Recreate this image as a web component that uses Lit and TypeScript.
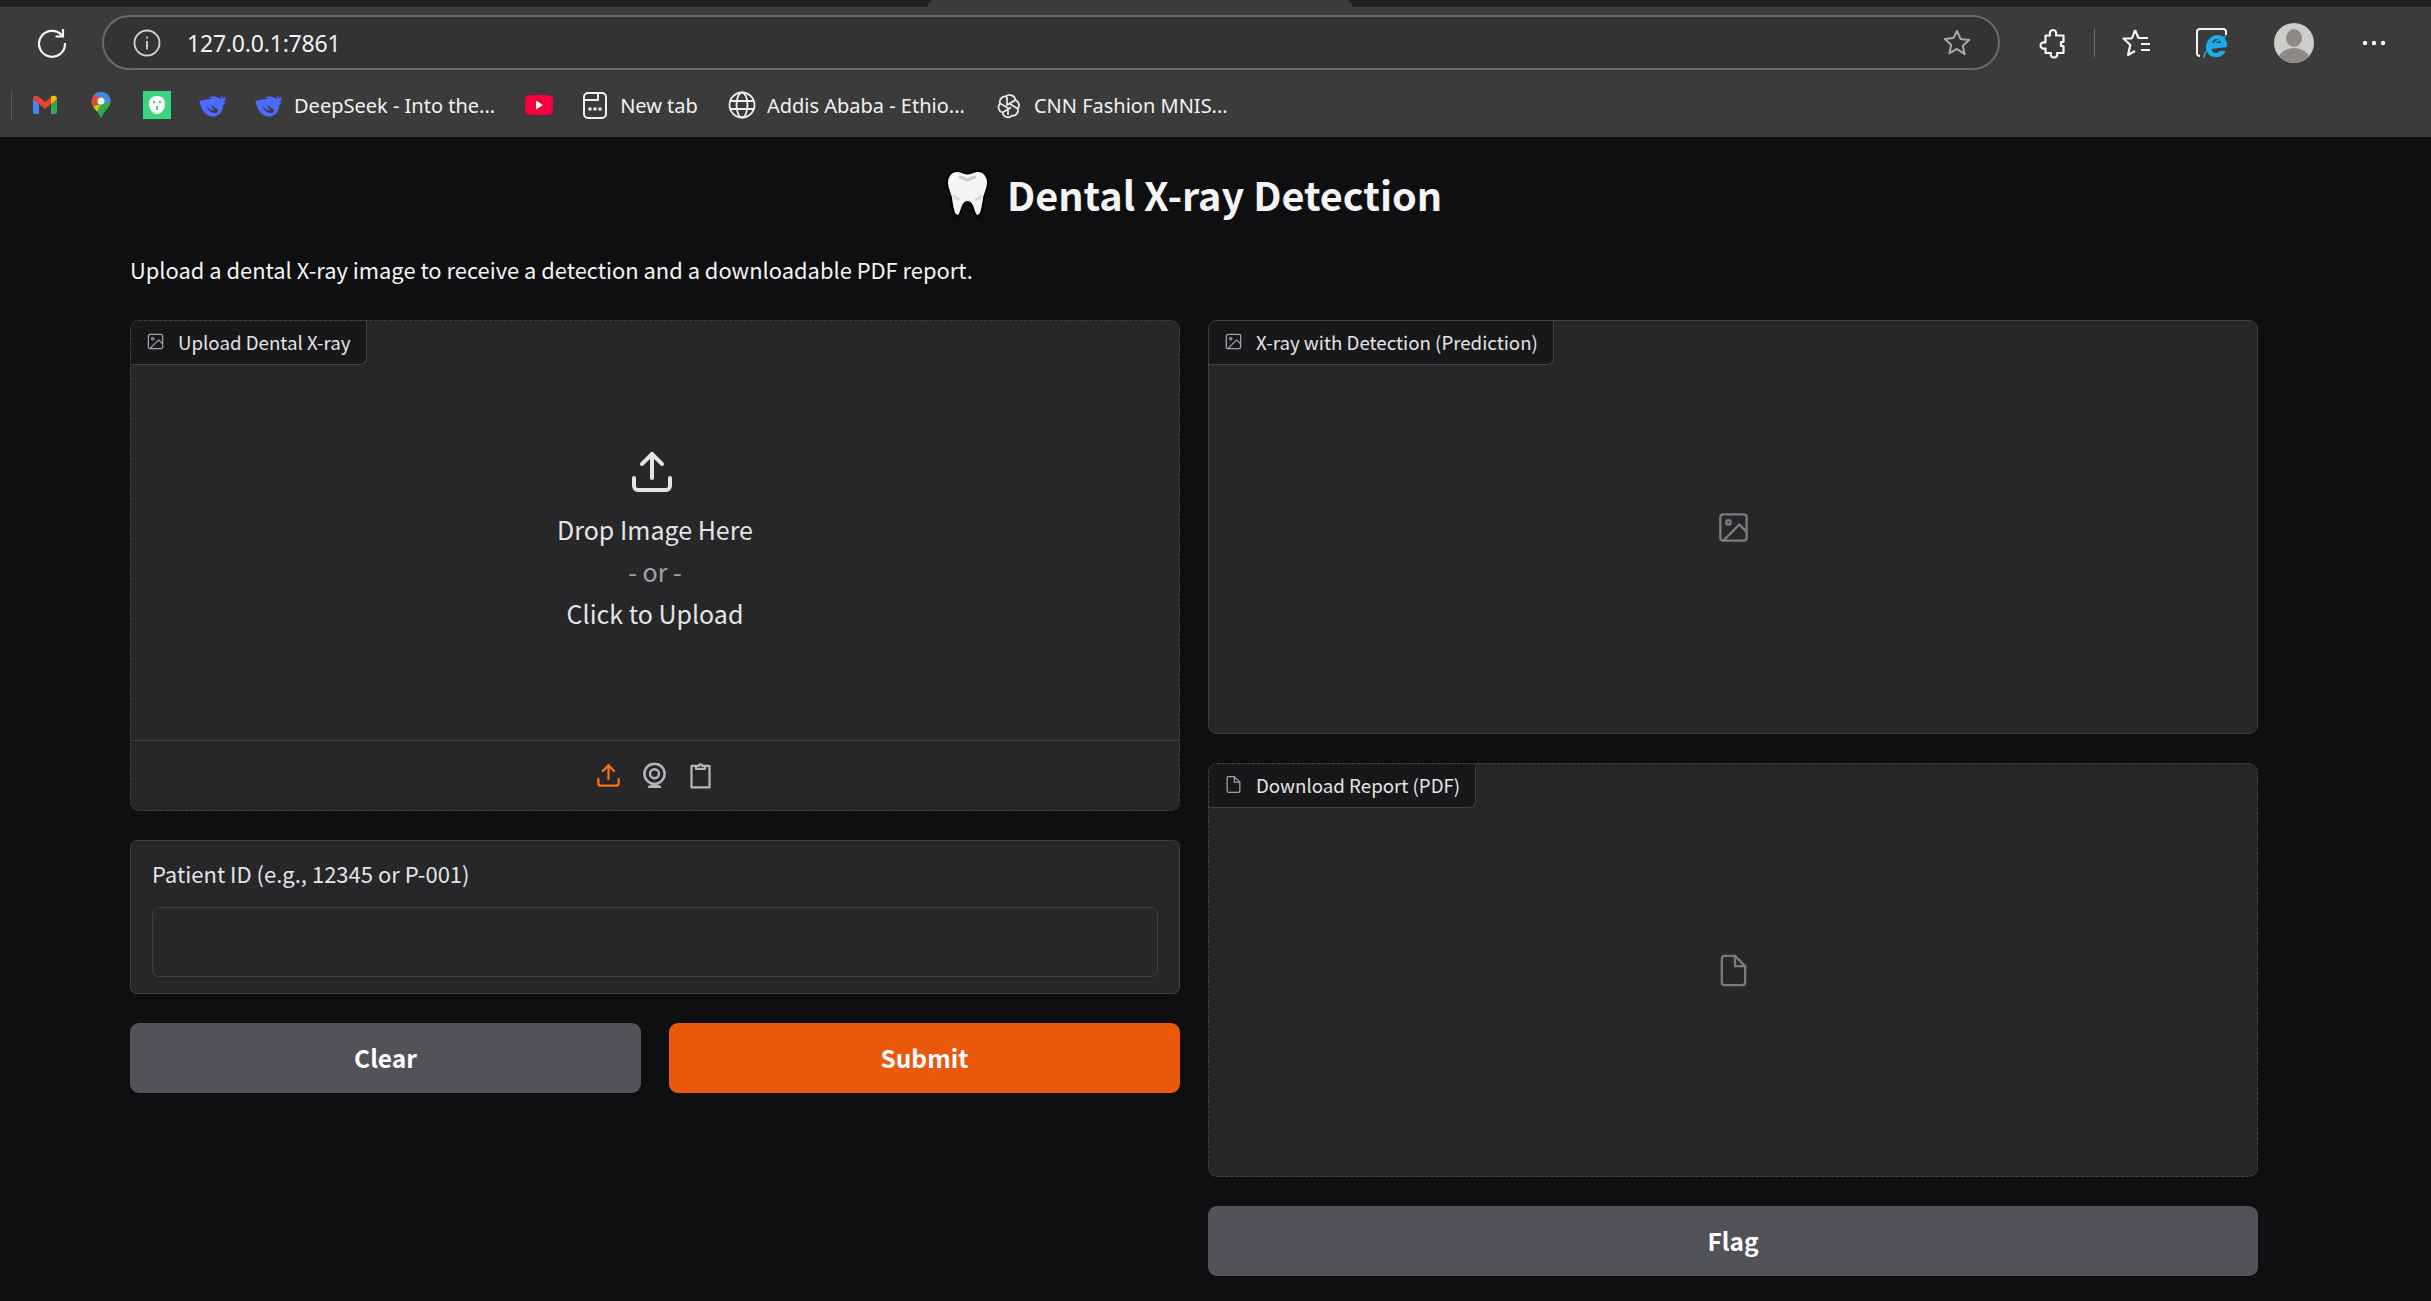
import { LitElement, html, css } from 'lit';
import { customElement } from 'lit/decorators.js';

const imageIcon = html`<svg viewBox="0 0 24 24" fill="none" stroke="currentColor" stroke-width="1.6" stroke-linecap="round" stroke-linejoin="round"><rect x="3" y="3" width="18" height="18" rx="2"></rect><circle cx="8.5" cy="8.5" r="1.5"></circle><polyline points="21 15 16 10 5 21"></polyline></svg>`;

const fileIcon = html`<svg viewBox="0 0 24 24" fill="none" stroke="currentColor" stroke-width="1.6" stroke-linecap="round" stroke-linejoin="round"><path d="M13 2H6a2 2 0 0 0-2 2v16a2 2 0 0 0 2 2h12a2 2 0 0 0 2-2V9z"></path><polyline points="13 2 13 9 20 9"></polyline></svg>`;

const uploadIcon = html`<svg viewBox="0 0 24 24" fill="none" stroke="currentColor" stroke-width="2" stroke-linecap="round" stroke-linejoin="round"><path d="M21 15v4a2 2 0 0 1-2 2H5a2 2 0 0 1-2-2v-4"></path><polyline points="17 8 12 3 7 8"></polyline><line x1="12" y1="3" x2="12" y2="15"></line></svg>`;

const deepseekIcon = html`<svg class="bm-icon" viewBox="0 0 28 28"><path fill="#4d6bfe" d="M27 6c-1 0-1.600.8-2.300 1.500-.6-1.500-1.900-2.400-3.700-2.500 1 1 1.500 2 1.600 3.200-1.600-1-3.300-1.700-5.300-2.200-3-.7-5.600-.5-8 .6 1.500.2 3 .7 4.300 1.500-4-.6-8 1-9.800 1.300-1.300.3-2.300 0-3.300-.6C1 14 3 21 8.500 24c4.500 2.500 9.500 1.800 12.500-1.500 2-2.200 3-5 3-8 1.200-.8 2.200-2 2.600-3.500-.9.500-1.600.7-2.300.6C25.800 10.500 26.800 8.500 27 6zM17 22c-4 .5-8-2.500-10-7 2.500 3 5.500 4.500 9 4.500-2-1.500-3.500-4-3.700-6.500 2.200 3 4.300 5 6.700 5.500.3 1.500-.2 3-2 3.500z"></path></svg>`;

@customElement('browser-bar')
class BrowserBar extends LitElement {
  static styles = css`
    :host {
      display: block;
      background: #3b3b3b;
      height: 137px;
      color: #f2f2f2;
      font-family: 'Noto Sans', sans-serif;
    }

    .strip {
      height: 7px;
      background: #1f1f1f;
      display: flex;
    }

    .strip__tab {
      margin-left: 928px;
      width: 424px;
      background: #3b3b3b;
      border-radius: 6px 6px 0 0;
    }

    .row {
      display: flex;
      align-items: center;
      height: 55px;
      margin-top: 8px;
    }

    .reload {
      width: 34px;
      height: 34px;
      margin: 0 33px 0 35px;
    }

    .address {
      width: 1898px;
      box-sizing: border-box;
      height: 55px;
      background: #333;
      border: 2px solid #6a6a6a;
      border-radius: 28px;
      display: flex;
      align-items: center;
      padding: 0 26px 0 29px;
    }

    .address__info {
      width: 28px;
      height: 28px;
      color: #d4d4d4;
    }

    .address__url {
      margin-left: 26px;
      font-size: 23px;
      flex: 1;
      letter-spacing: -0.2px;
    }

    .address__star {
      width: 30px;
      height: 30px;
    }

    .tool {
      width: 32px;
      height: 32px;
      flex: none;
    }

    .tool--puzzle { margin-left: 36px; }
    .tool--fav { margin-left: 26px; }
    .tool--edge { margin-left: 43px; }

    .sep {
      width: 1px;
      height: 28px;
      background: #6e6e6e;
      margin-left: 26px;
    }

    .avatar {
      width: 40px;
      height: 40px;
      margin-left: 46px;
      flex: none;
    }

    .dots {
      width: 24px;
      height: 8px;
      margin-left: 48px;
      flex: none;
    }

    .bookmarks {
      display: flex;
      align-items: center;
      gap: 28px;
      height: 30px;
      margin-top: 20px;
      padding-left: 11px;
      font-size: 20px;
    }

    .bookmarks__sep {
      width: 1px;
      height: 28px;
      background: #5c5c5c;
      margin-right: -9px;
    }

    .bookmark {
      display: flex;
      align-items: center;
      gap: 11px;
      padding-right: 2px;
      white-space: nowrap;
    }

    .bm-icon {
      width: 28px;
      height: 28px;
      flex: none;
    }
  `;

  render() {
    return html`
      <div class="strip"><div class="strip__tab"></div></div>
      <div class="row">
        <svg class="reload" viewBox="0 0 34 34" fill="none" stroke="#f5f5f5" stroke-width="2.200"><path d="M27 9.500A13 13 0 1 0 30 17"></path><path d="M28 3v7.500h-7.500"></path></svg>
        <div class="address">
          <svg class="address__info" viewBox="0 0 28 28" fill="none" stroke="currentColor" stroke-width="1.800"><circle cx="14" cy="14" r="12.500"></circle><line x1="14" y1="12" x2="14" y2="20.500"></line><line x1="14" y1="7.500" x2="14" y2="9.500"></line></svg>
          <span class="address__url">127.0.0.1:7861</span>
          <svg class="address__star" viewBox="0 0 30 30" fill="none" stroke="#a8a8a8" stroke-width="2" stroke-linejoin="round"><path d="M15 3l3.600 8 8.600.9-6.400 5.800 1.800 8.500L15 21l-7.600 4.200 1.800-8.500-6.400-5.800 8.600-.9z"></path></svg>
        </div>
        <svg class="tool tool--puzzle" viewBox="0 0 32 32" fill="none" stroke="#f5f5f5" stroke-width="2.200" stroke-linejoin="round"><path d="M9.500 8.500H14c-1-3 .8-5.500 3-5.500s4 2.500 3 5.500h7.500V15H25v4h2.500v7H21c1 3-.8 4.500-3 4.500s-4-1.500-3-4.500H9.500v-4.500c-3 .8-5-1-5-3s2-3.800 5-3z"></path></svg>
        <div class="sep"></div>
        <svg class="tool tool--fav" viewBox="0 0 32 32" fill="none" stroke="#f5f5f5" stroke-width="2.200" stroke-linejoin="round"><path d="M14 3l3.500 8H27M11 11.500H2.500l6.800 6.500-2.300 10 7-4M20 17h9M20 23h9"></path><path d="M14 3l-3 8.500"></path></svg>
        <svg class="tool tool--edge" viewBox="0 0 32 32" fill="none"><path d="M4 29a3 3 0 0 1-3-3V5a3 3 0 0 1 3-3h23a3 3 0 0 1 3 3v3" stroke="#f5f5f5" stroke-width="2"></path><path fill="#19aeea" d="M31 20c.5-8-4-12-9.500-12S10 13 10 20c0 6 4 10 10 10 4.500 0 8-2 9.500-6h-6c-.8 1.300-2 2-3.500 2-2.300 0-4-1.500-4.300-4zM16 16c.4-2.300 2.300-4 4.700-4 2.500 0 4.300 1.700 4.500 4z"></path><path d="M8 31c-1-3 5-14 22-22" stroke="#19aeea" stroke-width="1.500"></path></svg>
        <svg class="avatar" viewBox="0 0 40 40"><defs><clipPath id="av"><circle cx="20" cy="20" r="20"></circle></clipPath></defs><g clip-path="url(#av)"><rect width="40" height="40" fill="#cfcdca"></rect><ellipse cx="20" cy="15" rx="8" ry="9" fill="#8e8b87"></ellipse><ellipse cx="20" cy="38" rx="16" ry="13" fill="#8e8b87"></ellipse></g></svg>
        <svg class="dots" viewBox="0 0 24 8" fill="#f5f5f5"><circle cx="3" cy="4" r="2.200"></circle><circle cx="12" cy="4" r="2.200"></circle><circle cx="21" cy="4" r="2.200"></circle></svg>
      </div>
      <div class="bookmarks">
        <div class="bookmarks__sep"></div>
        <svg class="bm-icon" viewBox="0 0 28 28" fill="none"><path d="M2 8v13a2 2 0 0 0 2 2h4V13z" fill="#4285f4"></path><path d="M26 8v13a2 2 0 0 1-2 2h-4V13z" fill="#34a853"></path><path d="M2 8c0-3 3-4 5-2.500l7 5.500 7-5.500C23 4 26 5 26 8l-6 5-6 5-6-5z" fill="#ea4335"></path><path d="M20 5.500L21 5c2-1 5 0 5 3l-6 5z" fill="#fbbc04"></path></svg>
        <svg class="bm-icon" viewBox="0 0 28 28"><path d="M14 1a9.500 9.500 0 0 1 9.500 9.500c0 6-6.500 9-9.500 17-3-8-9.500-11-9.500-17A9.500 9.500 0 0 1 14 1z" fill="#34a853"></path><path d="M7 4a9.500 9.500 0 0 0-2.500 6.500c0 2 .8 3.700 1.800 5.200L14 7z" fill="#ea4335"></path><path d="M7 4a9.500 9.500 0 0 1 7-3c2 0 4 .7 5.500 1.800L14 7z" fill="#4285f4"></path><path d="M6.300 15.700c1 1.500 2.400 3 3.700 4.700L14 13z" fill="#fbbc04"></path><path d="M19.500 2.800a9.500 9.500 0 0 1 4 7.700L14 12z" fill="#4285f4"></path><circle cx="14" cy="10" r="3.500" fill="#fff" opacity=".9"></circle></svg>
        <svg class="bm-icon" viewBox="0 0 28 28"><rect width="28" height="28" fill="#3ad57f"></rect><path d="M14 5c5 0 8 3 8 7.500C22 18 18.500 23 14 23S6 18 6 12.500C6 8 9 5 14 5z" fill="#fff"></path><circle cx="11" cy="11" r="1.200" fill="#3ad57f"></circle><circle cx="17" cy="11" r="1.200" fill="#3ad57f"></circle><path d="M13 15h2v4h-2z" fill="#3ad57f"></path></svg>
        ${deepseekIcon}
        <div class="bookmark">${deepseekIcon}<span>DeepSeek - Into the...</span></div>
        <svg class="bm-icon" viewBox="0 0 28 28"><rect y="4" width="28" height="20" rx="5" fill="#f5003c"></rect><path d="M11 9.500l7 4.500-7 4.500z" fill="#fff"></path></svg>
        <div class="bookmark"><svg class="bm-icon" viewBox="0 0 28 28" fill="none" stroke="#f0f0f0" stroke-width="2"><rect x="3" y="2" width="22" height="25" rx="4"></rect><path d="M3 9h14V2"></path><circle cx="9" cy="18" r=".8"></circle><circle cx="14" cy="18" r=".8"></circle><circle cx="19" cy="18" r=".8"></circle></svg><span>New tab</span></div>
        <div class="bookmark"><svg class="bm-icon" viewBox="0 0 28 28" fill="none" stroke="#f0f0f0" stroke-width="1.800"><circle cx="14" cy="14" r="12.500"></circle><ellipse cx="14" cy="14" rx="5.500" ry="12.500"></ellipse><path d="M2.500 10h23M2.500 18h23"></path></svg><span>Addis Ababa - Ethio...</span></div>
        <div class="bookmark"><svg class="bm-icon" viewBox="0 0 28 28" fill="none" stroke="#e8e8e8" stroke-width="1.800" stroke-linejoin="round"><path d="M11 5.500a5.500 5.500 0 0 1 9.300 3.600 5.500 5.500 0 0 1 2.500 8.600 5.500 5.500 0 0 1-6 7 5.500 5.500 0 0 1-9.300-3.200 5.500 5.500 0 0 1-2.500-9A5.500 5.500 0 0 1 11 5.500z"></path><path d="M20.300 9.100L12 14v-8M7.500 21.500L16 16.500M22.800 17.700L14 12.500M5.200 12.500L13 17v7"></path></svg><span>CNN Fashion MNIS...</span></div>
      </div>
    `;
  }
}

@customElement('app-root')
class AppRoot extends LitElement {
  static styles = css`
    :host {
      display: block;
      min-height: 100vh;
      background: #0f0f11;
      font-family: 'Noto Sans CJK SC', 'Source Sans Pro', sans-serif;
      color: #f4f4f5;
      overflow: hidden;
    }

    .page {
      width: 2128px;
      margin-left: 130px;
    }

    .title {
      display: flex;
      justify-content: center;
      align-items: center;
      gap: 18px;
      height: 48px;
      margin: 32px 0 0;
      font-size: 39.6px;
      font-weight: 700;
    }

    .title__tooth {
      width: 43px;
      height: 47px;
    }

    .intro {
      margin: 36px 0 0;
      font-size: 21.9px;
      line-height: 34px;
    }

    .columns {
      display: grid;
      grid-template-columns: 1fr 1fr;
      gap: 28px;
      margin-top: 33px;
    }

    .stack {
      display: flex;
      flex-direction: column;
      gap: 29px;
    }

    .block {
      position: relative;
      box-sizing: border-box;
      background: #27272a;
      border: 1px solid #3f3f46;
      border-radius: 9px;
      overflow: hidden;
    }

    .block--dashed {
      border-style: dashed;
    }

    .block--upload {
      height: 491px;
      display: flex;
      flex-direction: column;
    }

    .block--output {
      height: 414px;
      display: flex;
      align-items: center;
      justify-content: center;
    }

    .tag {
      position: absolute;
      top: 0;
      left: 0;
      display: flex;
      align-items: center;
      gap: 13px;
      box-sizing: border-box;
      height: 44px;
      padding: 0 15px 2px 15px;
      background: #18181b;
      border-right: 1px solid #3f3f46;
      border-bottom: 1px solid #3f3f46;
      border-bottom-right-radius: 7px;
      font-size: 18.7px;
      color: #e4e4e7;
    }

    .tag svg {
      width: 19px;
      height: 19px;
      color: #a1a1aa;
    }

    .drop {
      flex: 1;
      display: flex;
      flex-direction: column;
      align-items: center;
      padding-top: 127px;
      font-size: 25px;
      line-height: 42px;
      color: #e4e4e7;
    }

    .drop__icon {
      width: 48px;
      height: 48px;
      margin: 0 6px 12px 0;
    }

    .drop__or {
      color: #a1a1aa;
    }

    .sources {
      display: flex;
      justify-content: center;
      align-items: center;
      gap: 19px;
      box-sizing: border-box;
      height: 70px;
      padding-right: 2px;
      border-top: 1px solid #3f3f46;
    }

    .sources svg {
      width: 27px;
      height: 27px;
      color: #b4b4b8;
    }

    .sources .sources__active {
      color: #f97316;
    }

    .placeholder {
      width: 35px;
      height: 35px;
      color: #7b7b7f;
    }

    .field {
      box-sizing: border-box;
      height: 154px;
      padding: 17px 21px 16px;
      background: #27272a;
      border: 1px solid #3f3f46;
      border-radius: 7px;
    }

    .field__label {
      display: block;
      font-size: 22px;
      line-height: 30px;
      color: #e4e4e7;
    }

    .field__input {
      display: block;
      box-sizing: border-box;
      width: 100%;
      height: 70px;
      margin-top: 19px;
      background: #27272a;
      border: 1px solid #3f3f46;
      border-radius: 7px;
      outline: none;
    }

    .actions {
      display: grid;
      grid-template-columns: 1fr 1fr;
      gap: 28px;
    }

    .button {
      height: 70px;
      padding: 0 0 2px;
      border: none;
      border-radius: 9px;
      background: #52525b;
      color: #fff;
      font-family: inherit;
      font-size: 24.5px;
      font-weight: 700;
    }

    .button--primary {
      background: #ea580c;
    }
  `;

  render() {
    return html`
      <browser-bar></browser-bar>
      <main class="page">
        <h1 class="title">
          <svg class="title__tooth" viewBox="0 0 43 47">
            <path d="M11 1c4 0 7 2.500 10.500 2.500S28 1 32 1c6 0 10 5 10 12 0 6-3 10-4 15-1 6-1.500 18-6.500 18-4.500 0-3.500-14-10-14s-5.500 14-10 14C6.500 46 6 34 5 28 4 23 1 19 1 13 1 6 5 1 11 1z" fill="#f4f4f2" stroke="#000" stroke-width="2"></path>
            <path d="M14 7c3 0 5 3 7.500 3S26 7 29 7" fill="none" stroke="#c9c9c6" stroke-width="3" stroke-linecap="round"></path>
            <path d="M8 26c1 2 3 3 5 3M35 26c-1 2-3 3-5 3" fill="none" stroke="#d8d8d5" stroke-width="3" stroke-linecap="round"></path>
          </svg>
          <span>Dental X-ray Detection</span>
        </h1>
        <p class="intro">Upload a dental X-ray image to receive a detection and a downloadable PDF report.</p>
        <div class="columns">
          <div class="stack">
            <section class="block block--dashed block--upload">
              <div class="tag">${imageIcon}<span>Upload Dental X-ray</span></div>
              <div class="drop">
                <div class="drop__icon">${uploadIcon}</div>
                <span>Drop Image Here</span>
                <span class="drop__or">- or -</span>
                <span>Click to Upload</span>
              </div>
              <div class="sources">
                <svg class="sources__active" viewBox="0 0 24 24" fill="none" stroke="currentColor" stroke-width="2" stroke-linecap="round" stroke-linejoin="round"><path d="M21 15v4a2 2 0 0 1-2 2H5a2 2 0 0 1-2-2v-4"></path><polyline points="17 8 12 3 7 8"></polyline><line x1="12" y1="3" x2="12" y2="15"></line></svg>
                <svg viewBox="0 0 24 24" fill="none" stroke="currentColor" stroke-width="2.200"><circle cx="12" cy="10.500" r="9"></circle><circle cx="12" cy="10.500" r="4"></circle><path d="M6 23c0-2 2-3 6-3s6 1 6 3z" fill="currentColor" stroke="none"></path></svg>
                <svg viewBox="0 0 24 24" fill="none" stroke="currentColor" stroke-width="2" stroke-linejoin="round"><path d="M8 3.500H4v19h16v-19h-4"></path><path d="M8 6V3.500h2.500a1.500 1.500 0 0 1 3 0H16V6z"></path></svg>
              </div>
            </section>
            <label class="field">
              <span class="field__label">Patient ID (e.g., 12345 or P-001)</span>
              <input class="field__input" type="text" />
            </label>
            <div class="actions">
              <button class="button">Clear</button>
              <button class="button button--primary">Submit</button>
            </div>
          </div>
          <div class="stack">
            <section class="block block--output">
              <div class="tag">${imageIcon}<span>X-ray with Detection (Prediction)</span></div>
              <div class="placeholder">${imageIcon}</div>
            </section>
            <section class="block block--dashed block--output">
              <div class="tag">${fileIcon}<span>Download Report (PDF)</span></div>
              <div class="placeholder">${fileIcon}</div>
            </section>
            <button class="button">Flag</button>
          </div>
        </div>
      </main>
    `;
  }
}
